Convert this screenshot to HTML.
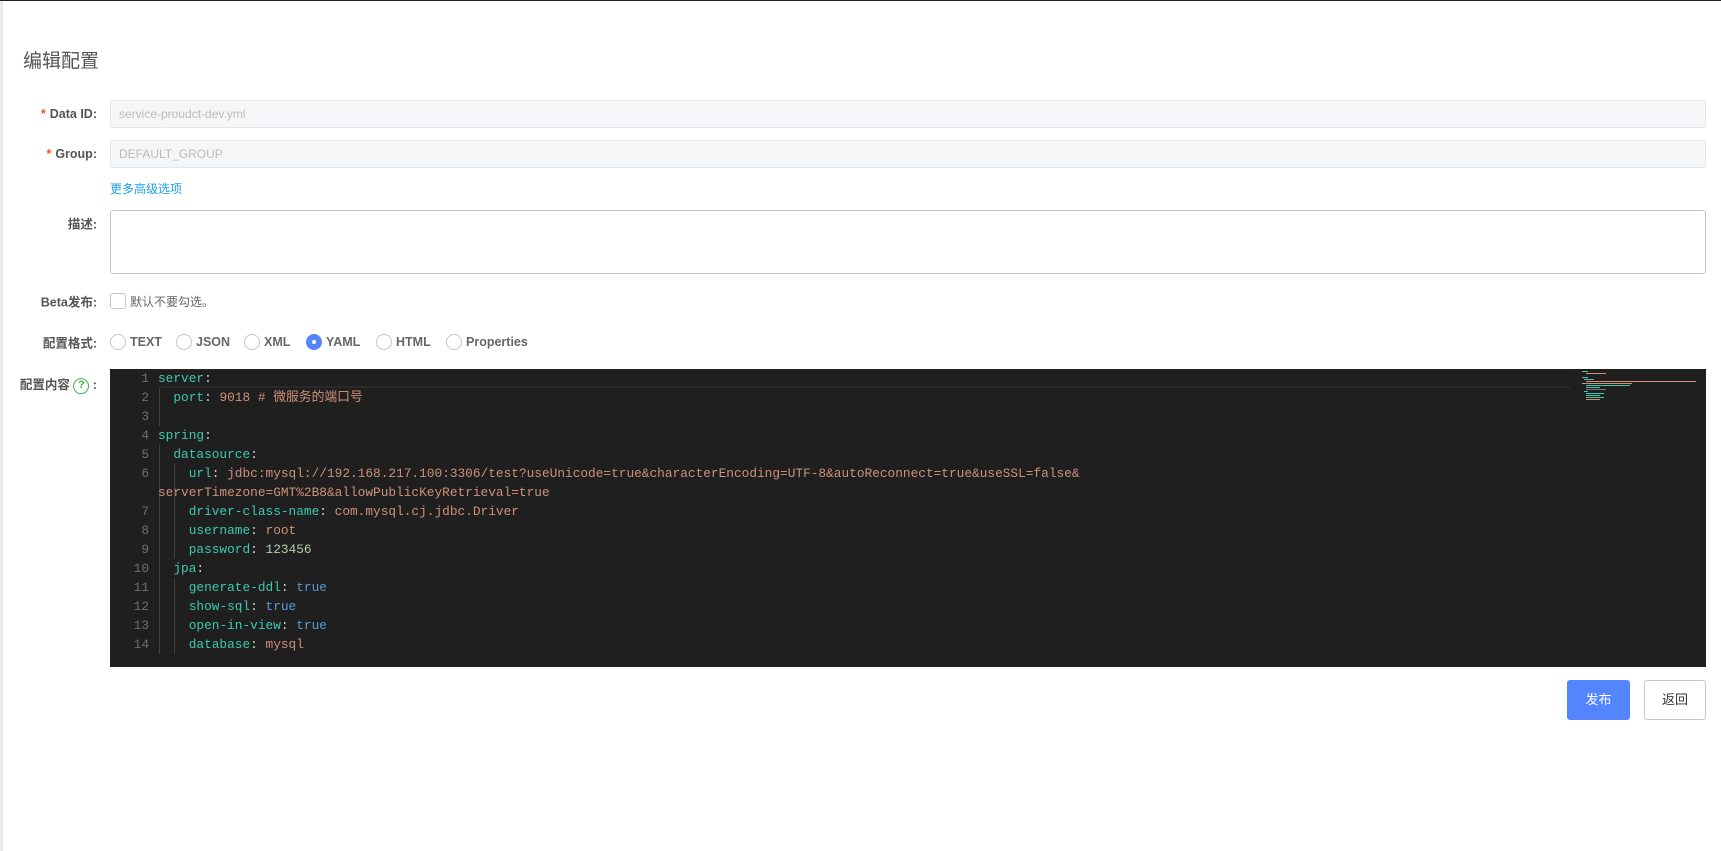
<!DOCTYPE html>
<html><head><meta charset="utf-8">
<style>
*{box-sizing:border-box;margin:0;padding:0}
body{width:1721px;height:851px;background:#fff;font-family:"Liberation Sans","Noto Sans CJK SC",sans-serif;position:relative;overflow:hidden;color:#333}
.topline{position:absolute;left:0;top:0;width:1721px;height:1px;background:#222}
.leftbar{position:absolute;left:0;top:1px;width:3px;height:850px;background:#e8eaef}
.title{position:absolute;left:23px;top:46px;font-size:19px;color:#555}
.lbl{position:absolute;right:1624px;font-size:12.5px;font-weight:bold;color:#555;white-space:nowrap;transform:translateY(-50%)}
.lbl .s{color:#f4511e;margin-right:4px}
.inp{position:absolute;left:110px;width:1596px;height:28px;background:#f5f6f8;border:1px solid #e3e5ea;border-radius:3px;font-size:12px;color:#bbb;padding-left:8px;line-height:26px}
.link{position:absolute;left:110px;top:180px;font-size:12px;color:#20a0e8}
.ta{position:absolute;left:110px;top:210px;width:1596px;height:64px;border:1px solid #c4c6cf;border-radius:3px}
.cb{position:absolute;left:110px;top:293px;width:16px;height:16px;border:1px solid #c4c6cf;border-radius:3px}
.cbt{position:absolute;left:130px;top:293px;font-size:12px;color:#666}
.r{position:absolute;top:334px;width:16px;height:16px;border:1px solid #c4c6cf;border-radius:50%}
.r.on{background:#5584ff;border-color:#5584ff}
.r.on::after{content:"";position:absolute;left:5px;top:5px;width:4px;height:4px;border-radius:50%;background:#fff}
.rt{position:absolute;top:334px;font-size:12.5px;font-weight:bold;color:#666;line-height:16px}
.ed{position:absolute;left:110px;top:369px;width:1596px;height:298px;background:#1f1f1f;overflow:hidden}
.gut{position:absolute;left:0;top:0;width:39px;text-align:right;color:#6e6e6e;font-family:"Liberation Mono",monospace;font-size:12.8px;line-height:19px}
.code{position:absolute;left:48px;top:0;font-family:"Liberation Mono","Noto Sans CJK SC",monospace;font-size:12.8px;line-height:19px;color:#d4d4d4;white-space:pre}
.cur{position:absolute;left:48px;top:0;width:1412px;height:19px;border-top:1px solid #282828;border-bottom:2px solid #2a2a2a}
.k{color:#3dc9b0}.s2{color:#ce9178}.n{color:#b5cea8}.b{color:#569cd6}
.guide{position:absolute;width:1px;background:#404040}
.btn{position:absolute;top:680px;height:40px;font-size:13px;line-height:40px;text-align:center;border-radius:3px}
</style></head><body>
<div class="topline"></div><div class="leftbar"></div>
<div class="title">编辑配置</div>

<div class="lbl" style="top:114px"><span class="s">*</span>Data ID:</div>
<div class="inp" style="top:100px">service-proudct-dev.yml</div>
<div class="lbl" style="top:154px"><span class="s">*</span>Group:</div>
<div class="inp" style="top:140px">DEFAULT_GROUP</div>
<div class="link">更多高级选项</div>
<div class="lbl" style="top:223px">描述:</div>
<div class="ta"></div>
<div class="lbl" style="top:301px">Beta发布:</div>
<div class="cb"></div><div class="cbt">默认不要勾选。</div>
<div class="lbl" style="top:342px">配置格式:</div>
<div class="r" style="left:110px"></div><div class="rt" style="left:130px">TEXT</div>
<div class="r" style="left:176px"></div><div class="rt" style="left:196px">JSON</div>
<div class="r" style="left:244px"></div><div class="rt" style="left:264px">XML</div>
<div class="r on" style="left:306px"></div><div class="rt" style="left:326px">YAML</div>
<div class="r" style="left:376px"></div><div class="rt" style="left:396px">HTML</div>
<div class="r" style="left:446px"></div><div class="rt" style="left:466px">Properties</div>
<div class="lbl" style="top:384px">配置内容 <span style="display:inline-block;width:16px;height:16px;border:1.5px solid #3bb34a;border-radius:50%;color:#3bb34a;font-size:11px;text-align:center;line-height:13px;vertical-align:middle">?</span> :</div>

<div class="ed">
<div class="cur"></div>
<div class="guide" style="left:49px;top:19px;height:38px"></div>
<div class="guide" style="left:49px;top:76px;height:209px"></div>
<div class="guide" style="left:64px;top:95px;height:95px"></div>
<div class="guide" style="left:64px;top:209px;height:76px"></div>
<div class="gut">1<br>2<br>3<br>4<br>5<br>6<br>&nbsp;<br>7<br>8<br>9<br>10<br>11<br>12<br>13<br>14</div>
<div class="code"><span class="k">server</span>:
  <span class="k">port</span>: <span class="s2">9018 # 微服务的端口号</span>

<span class="k">spring</span>:
  <span class="k">datasource</span>:
    <span class="k">url</span>: <span class="s2">jdbc:mysql://192.168.217.100:3306/test?useUnicode=true&amp;characterEncoding=UTF-8&amp;autoReconnect=true&amp;useSSL=false&amp;</span>
<span class="s2">serverTimezone=GMT%2B8&amp;allowPublicKeyRetrieval=true</span>
    <span class="k">driver-class-name</span>: <span class="s2">com.mysql.cj.jdbc.Driver</span>
    <span class="k">username</span>: <span class="s2">root</span>
    <span class="k">password</span>: <span class="n">123456</span>
  <span class="k">jpa</span>:
    <span class="k">generate-ddl</span>: <span class="b">true</span>
    <span class="k">show-sql</span>: <span class="b">true</span>
    <span class="k">open-in-view</span>: <span class="b">true</span>
    <span class="k">database</span>: <span class="s2">mysql</span></div>
<div style="position:absolute;left:1462px;top:0;width:134px;height:298px;background:#1f1f1f">
<div style="position:absolute;left:10px;top:2px;width:6px;height:1px;background:#3dc9b0"></div>
<div style="position:absolute;left:14px;top:4px;width:20px;height:1px;background:#ce9178"></div>
<div style="position:absolute;left:10px;top:8px;width:6px;height:1px;background:#3dc9b0"></div>
<div style="position:absolute;left:12px;top:10px;width:10px;height:1px;background:#3dc9b0"></div>
<div style="position:absolute;left:14px;top:12px;width:110px;height:1px;background:#ce9178"></div>
<div style="position:absolute;left:10px;top:14px;width:50px;height:1px;background:#ce9178"></div>
<div style="position:absolute;left:14px;top:16px;width:44px;height:1px;background:#3dc9b0"></div>
<div style="position:absolute;left:14px;top:18px;width:14px;height:1px;background:#3dc9b0"></div>
<div style="position:absolute;left:14px;top:20px;width:20px;height:1px;background:#777"></div>
<div style="position:absolute;left:12px;top:22px;width:4px;height:1px;background:#3dc9b0"></div>
<div style="position:absolute;left:14px;top:24px;width:18px;height:1px;background:#3dc9b0"></div>
<div style="position:absolute;left:14px;top:26px;width:14px;height:1px;background:#3dc9b0"></div>
<div style="position:absolute;left:14px;top:28px;width:18px;height:1px;background:#3dc9b0"></div>
<div style="position:absolute;left:14px;top:30px;width:14px;height:1px;background:#ce9178"></div>
</div>
</div>

<div class="btn" style="left:1567px;width:63px;background:#5584ff;color:#fff">发布</div>
<div class="btn" style="left:1644px;width:62px;border:1px solid #c4c6cf;color:#333;line-height:38px">返回</div>
</body></html>
